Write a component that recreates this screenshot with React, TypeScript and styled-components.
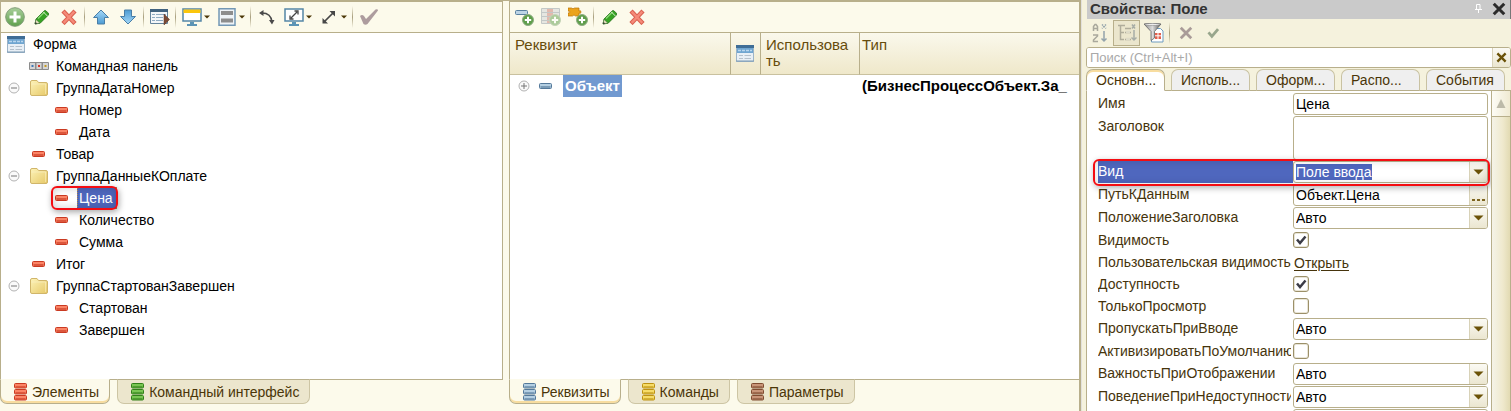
import React, { ReactNode } from "react";
import styled, { createGlobalStyle, css } from "styled-components";

const line = "#b8af8b";
const cream = "#fcfaeb";

const GlobalStyle = createGlobalStyle`
  *, *::before, *::after { box-sizing: border-box; }
  body {
    margin: 0;
    background: ${cream};
    color: #000;
    font: 14px/16px "Liberation Sans", Arial, sans-serif;
    overflow: hidden;
  }
  button, input, select, textarea { font: inherit; color: inherit; }
  svg { display: block; flex: none; }
`;

/* ---------- layout ---------- */

const Workspace = styled.div`
  display: grid;
  grid-template-columns: minmax(0, 503fr) 6px minmax(0, 572fr) 430px;
  height: 100vh;
`;

const Pane = styled.section<{ $edge?: number }>`
  display: flex;
  flex-direction: column;
  min-width: 0;
  padding-bottom: 7px;
  border-top: 2px solid ${line};
  border-right: ${(p) => p.$edge ?? 0}px solid ${line};
`;

const Splitter = styled.div`
  border-top: 1px solid ${line};
`;

const PaneBody = styled.div<{ $right?: boolean }>`
  display: flex;
  flex-direction: column;
  flex: 1;
  min-height: 0;
  background: #fff;
  border-left: 1px solid ${line};
  border-right: ${(p) => (p.$right ? 1 : 0)}px solid ${line};
`;

const Toolbar = styled.div<{ $plain?: boolean }>`
  display: flex;
  align-items: center;
  height: ${(p) => (p.$plain ? 28 : 31)}px;
  flex: none;
  background: ${(p) => (p.$plain ? "transparent" : cream)};
  border-bottom: ${(p) => (p.$plain ? 0 : 1)}px solid ${line};
`;

const ToolButton = styled.button<{ $menu?: boolean; $pressed?: boolean }>`
  display: flex;
  align-items: center;
  justify-content: center;
  gap: 2px;
  width: ${(p) => (p.$menu ? 35 : 27)}px;
  height: 26px;
  padding: 0;
  border: 1px solid transparent;
  background: none;
  ${(p) =>
    p.$pressed &&
    css`
      background: #ebe6cd;
      border-color: ${line};
    `}
`;

const Separator = styled.span`
  width: 1px;
  height: 22px;
  margin: 0 2px;
  background: linear-gradient(transparent, #a89f7d, transparent);
`;

/* ---------- tree ---------- */

const Tree = styled.ul`
  flex: 1;
  margin: 0;
  padding: 0;
  list-style: none;
  min-height: 0;
`;

const TreeRow = styled.li<{ $indent: number }>`
  display: flex;
  align-items: center;
  height: 22px;
  padding-left: ${(p) => p.$indent}px;
`;

const IconSlot = styled.span<{ $w: number }>`
  display: flex;
  justify-content: center;
  width: ${(p) => p.$w}px;
`;

const Expander = styled.button`
  display: flex;
  width: 12px;
  height: 12px;
  margin: 0 9px 0 7px;
  padding: 0;
  border: 0;
  background: none;
`;

const TreeText = styled.span<{ $selected?: boolean }>`
  padding: 3px 4px 3px 2px;
  margin-left: 5px;
  ${(p) =>
    p.$selected &&
    css`
      color: #fff;
      background: #4f67be;
      outline: 1px dotted #b98a4a;
      outline-offset: -1px;
    `}
`;

const Marked = styled.span`
  position: relative;
  display: flex;
  align-items: center;
  &::after {
    content: "";
    position: absolute;
    inset: -1px -1px -1px -4px;
    border: 2px solid #f40d12;
    border-radius: 6px;
    box-shadow: 1px 2px 6px rgba(0, 0, 0, 0.35), inset 0 0 8px rgba(0, 0, 0, 0.2);
    pointer-events: none;
  }
`;

/* ---------- tabs under the panes ---------- */

const BottomTabs = styled.div`
  display: flex;
  height: 25px;
  flex: none;
  &::after {
    content: "";
    flex: 1;
    border-top: 1px solid ${line};
  }
`;

const BottomTab = styled.button<{ $active?: boolean }>`
  display: flex;
  align-items: center;
  gap: 5px;
  padding: 0 10px 0 13px;
  margin: 0;
  color: #4a3508;
  white-space: nowrap;
  border: 1px solid ${(p) => (p.$active ? line : "#cdc5a4")};
  border-top: 1px solid ${(p) => (p.$active ? cream : line)};
  border-radius: 0 0 7px 7px;
  background: ${(p) => (p.$active ? cream : "#ece6cd")};
  box-shadow: ${(p) => (p.$active ? "inset 0 -2px 0 #f8dda0" : "none")};
`;

const TabGap = styled.span`
  width: 7px;
  border-top: 1px solid ${line};
`;

/* ---------- attribute table ---------- */

const AttrTable = styled.table`
  width: 100%;
  table-layout: fixed;
  border-collapse: separate;
  border-spacing: 0;
  font-size: 15px;
`;

const HeadCell = styled.th<{ $w?: number }>`
  width: ${(p) => (p.$w ? `${p.$w}px` : "auto")};
  height: 42px;
  padding: 4px 0 0 5px;
  text-align: left;
  vertical-align: top;
  font-weight: 400;
  color: #664c0c;
  background: linear-gradient(#faf8ec, #efe8ca);
  border-bottom: 1px solid #c9c19f;
  border-right: 1px solid ${line};
  &:last-child { border-right: 0; padding-left: 2px; }
`;

const IconHeadCell = styled(HeadCell)`
  vertical-align: middle;
  padding-top: 0;
`;

const Cell = styled.td`
  height: 22px;
  padding: 0 8px 0 2px;
  font-weight: 700;
  white-space: nowrap;
  overflow: hidden;
  &:first-child { padding-left: 1px; }
`;

const AttrName = styled.div`
  display: flex;
  align-items: center;
`;

const Chosen = styled.span`
  padding: 3px 2px;
  margin-left: 11px;
  color: #fff;
  background: #7199d0;
`;

/* ---------- property palette ---------- */

const Palette = styled.aside`
  display: flex;
  flex-direction: column;
  min-width: 0;
  min-height: 0;
  padding-left: 4px;
  overflow: hidden;
  background: #f5f2dd;
  border-left: 1px solid #e3e1dc;
`;

const TitleBar = styled.header`
  display: flex;
  align-items: center;
  height: 19px;
  flex: none;
  padding: 0 4px 2px 3px;
  margin-left: 1px;
  background: #cacaca;
  border-right: 1px solid #777;
`;

const Title = styled.h1`
  flex: 1;
  margin: 0;
  font-size: 15px;
  line-height: 16px;
  color: #333;
`;

const PlainButton = styled.button`
  padding: 0;
  margin-left: 10px;
  border: 0;
  background: none;
`;

const SearchBox = styled.div`
  display: flex;
  height: 21px;
  flex: none;
  background: #fff;
  border: 1px solid ${line};
  border-radius: 3px;
  overflow: hidden;
`;

const SearchInput = styled.input`
  flex: 1;
  min-width: 0;
  padding: 0 3px;
  border: 0;
  outline: 0;
  font-size: 13px;
  &::placeholder { color: #a9a9a9; opacity: 1; }
`;

const FieldButton = styled.button`
  display: flex;
  align-items: center;
  justify-content: center;
  width: 18px;
  flex: none;
  padding: 0;
  border: 0;
  border-left: 1px solid #d8d2b8;
  background: linear-gradient(#fbfaf4, #ebe6d0);
`;

const TopTabs = styled.div`
  display: flex;
  height: 23px;
  flex: none;
  padding-top: 1px;
`;

const TopTab = styled.button<{ $active?: boolean }>`
  flex: 1;
  min-width: 0;
  padding: 0 0 0 9px;
  text-align: left;
  color: #4a3508;
  border: 1px solid ${(p) => (p.$active ? line : "#c9c2a2")};
  border-bottom: 1px solid ${(p) => (p.$active ? "#fff" : line)};
  border-radius: 7px 7px 0 0;
  background: ${(p) => (p.$active ? "#fff" : "#efefef")};
  box-shadow: ${(p) => (p.$active ? "inset 0 2px 0 #f8dda0" : "none")};
`;

const TopGap = styled.span`
  width: 6px;
  border-bottom: 1px solid ${line};
`;

const PaletteBody = styled.div`
  display: flex;
  flex: 1;
  min-height: 0;
  background: #fff;
  border-left: 1px solid ${line};
`;

const PropList = styled.div`
  flex: 1;
  min-width: 0;
  padding: 2px 3px 0 11px;
  overflow: hidden;
`;

const PropRow = styled.div<{ $h: number; $marked?: boolean }>`
  position: relative;
  display: grid;
  grid-template-columns: 195px minmax(0, 1fr);
  height: ${(p) => p.$h}px;
  ${(p) =>
    p.$marked &&
    css`
      z-index: 1;
      &::after {
        content: "";
        position: absolute;
        inset: -2px -2px -2px -5px;
        border: 2px solid #f40d12;
        border-radius: 6px;
        box-shadow: 1px 2px 6px rgba(0, 0, 0, 0.3), inset 0 0 8px rgba(0, 0, 0, 0.15);
        pointer-events: none;
      }
    `}
`;

const PropLabel = styled.label<{ $selected?: boolean }>`
  height: 22px;
  padding: 2px 0;
  margin-right: ${(p) => (p.$selected ? 0 : 2)}px;
  white-space: nowrap;
  overflow: hidden;
  color: ${(p) => (p.$selected ? "#fff" : "#46340c")};
  background: ${(p) => (p.$selected ? "#4f67be" : "none")};
`;

const FieldBox = styled.div`
  display: flex;
  margin-bottom: 1px;
  background: #fff;
  border: 1px solid ${line};
  border-radius: 3px;
  overflow: hidden;
`;

const fieldReset = css`
  flex: 1;
  min-width: 0;
  margin: 0;
  padding: 0 2px;
  border: 0;
  outline: 0;
  background: none;
`;

const TextInput = styled.input`${fieldReset}`;
const TextArea = styled.textarea`${fieldReset} resize: none;`;
const Select = styled.select<{ $picked?: boolean }>`
  ${fieldReset}
  appearance: none;
  ${(p) =>
    p.$picked &&
    css`
      flex: none;
      margin: 2px auto 2px 2px;
      padding: 0;
      color: #fff;
      background: #4f67be;
    `}
`;

const ArrowCap = styled.span`
  display: flex;
  align-items: center;
  justify-content: center;
  width: 18px;
  flex: none;
  border-left: 1px solid #d8d2b8;
  background: linear-gradient(#fbfaf4, #ebe6d0);
`;

const CheckWrap = styled.span`
  position: relative;
  width: 16px;
  height: 16px;
  margin-top: 2px;
  svg {
    position: absolute;
    inset: 0;
    pointer-events: none;
  }
`;

const CheckInput = styled.input`
  appearance: none;
  display: block;
  width: 16px;
  height: 16px;
  margin: 0;
  border: 1px solid #9c9069;
  border-radius: 3px;
  background: #fff;
  box-shadow: inset 0 0 0 1px #e9e5d6;
`;

const LinkCell = styled.div`
  padding: 3px 0 0 1px;
`;

const OpenLink = styled.a`
  color: #46340c;
  text-underline-offset: 2px;
`;

const ScrollTrack = styled.div`
  width: 20px;
  border-left: 1px solid ${line};
  border-right: 1px solid ${line};
  background: linear-gradient(90deg, #f5f3e8, #efe9cd 60%, #e2dab2);
`;

const ScrollButton = styled.button`
  display: flex;
  align-items: center;
  justify-content: center;
  width: 100%;
  height: 26px;
  padding: 0;
  border: 0;
  border-bottom: 1px solid ${line};
  background: linear-gradient(90deg, #fdfcf6, #f0ead2);
`;

/* ---------- icons ---------- */

const DefsSvg = styled.svg`
  position: absolute;
`;

const Defs = () => (
  <DefsSvg width="0" height="0" aria-hidden>
    <defs>
      <linearGradient id="green" x2="0" y2="1"><stop stopColor="#a9cf9b" /><stop offset="1" stopColor="#5fa04c" /></linearGradient>
      <linearGradient id="blue" x2="0" y2="1"><stop stopColor="#a5d8f8" /><stop offset="1" stopColor="#4c9bd3" /></linearGradient>
      <linearGradient id="folder" x2="1" y2="1"><stop stopColor="#fdf3b8" /><stop offset="1" stopColor="#e6c867" /></linearGradient>
      <linearGradient id="steel" x2="1" y2="0"><stop stopColor="#8a8a8a" /><stop offset=".5" stopColor="#dcdcdc" /><stop offset="1" stopColor="#555" /></linearGradient>
    </defs>
  </DefsSvg>
);

const AddIcon = () => (
  <svg width="20" height="20" viewBox="0 0 20 20">
    <circle cx="10" cy="10" r="9.300" fill="url(#green)" stroke="#7f9c77" />
    <path d="M10 4.500v11M4.500 10h11" stroke="#fff" strokeWidth="3" />
  </svg>
);
const PencilIcon = () => (
  <svg width="16" height="16" viewBox="0 0 16 16">
    <path d="M1 15l1-5 8-8q1-1 2.200 0l2 2q1 1 0 2.200l-8 8z" fill="#37a324" stroke="#23701a" strokeWidth=".8" />
    <path d="M4 9.500l6.500-6.500" stroke="#8ad776" strokeWidth="1.500" />
    <path d="M9.200 2.800l4.200 4.200" stroke="#d9efcf" strokeWidth="1" />
    <path d="M1 15l1-4.600 3.800 3.700z" fill="#e9e3c2" stroke="#456b38" strokeWidth=".5" />
    <path d="M1 15l.6-2 1.500 1.500z" fill="#222" />
  </svg>
);
const DeleteIcon = () => (
  <svg width="16" height="16" viewBox="0 0 16 16">
    <path d="M3.500 3.500l9 9.500M12.500 3.500L3.500 13" stroke="#d9604f" strokeWidth="4.400" strokeLinecap="square" />
    <path d="M3.500 3.500l9 9.500M12.500 3.500L3.500 13" stroke="#f58a79" strokeWidth="2.400" strokeLinecap="square" />
  </svg>
);
const ArrowIcon = ({ down }: { down?: boolean }) => (
  <svg width="18" height="16" viewBox="0 0 18 16">
    <path transform={down ? "rotate(180 9 8)" : undefined} d="M9 1l7.500 7.500h-4V15h-7V8.500h-4z" fill="url(#blue)" stroke="#4a7ea6" strokeLinejoin="round" />
  </svg>
);
const WindowIcon = () => (
  <svg width="18" height="17" viewBox="0 0 18 17">
    <path d="M.5 .5h17v16H.5z" fill="#e8eff6" stroke="#9db4c8" />
    <path d="M0 0h18v3H0z" fill="#3f6d96" />
    <path d="M1 3h16v5H1z" fill="#6fa5d0" />
    <path d="M2 5.500h14" stroke="#b9d6ee" strokeWidth="1.500" strokeDasharray="3 1" />
    <path d="M3 10.500h4M8.500 10.500H15M3 13.500h4M8.500 13.500H15" stroke="#b5c0cb" />
    <path d="M0 16h18" stroke="#7d9ab3" />
  </svg>
);
const RunFormIcon = () => (
  <svg width="20" height="18" viewBox="0 0 20 18">
    <path d="M.5 1.500h17v14H.5z" fill="#f3f6f9" stroke="#64839c" />
    <path d="M0 1h18v3H0z" fill="#40627f" />
    <path d="M2 6.500h3M6 6.500h10M2 9.500h3M6 9.500h7M2 12.500h3M6 12.500h7" stroke="#8fabc2" strokeWidth="1.200" />
    <path d="M14 6l5.500 5.500L14 17z" fill="#7b4a35" stroke="#5c3524" strokeWidth=".5" />
  </svg>
);
const MonitorIcon = ({ resize }: { resize?: boolean }) => (
  <svg width="20" height="18" viewBox="0 0 20 18">
    <path d="M1 1h18v12H1z" fill="#fff" stroke="#5486a6" strokeWidth="1.500" />
    {resize ? (
      <path d="M7 10l6-6M6 7.500V11h3.500M10.500 3H14v3.500" fill="none" stroke="#454545" strokeWidth="1.300" />
    ) : (
      <path d="M1.500 1.500h17v3.500h-17z" fill="#fbc60c" />
    )}
    <path d="M8 14h4v2H8zM5 16h10v2H5z" fill="#5c94b5" />
  </svg>
);
const LayoutIcon = () => (
  <svg width="20" height="18" viewBox="0 0 20 18">
    <path d="M2 .8h16v16.400H2z" fill="#eef3f7" stroke="#7398b5" strokeWidth="1.500" />
    <path d="M4 3h12v4H4zM4 10.500h12v4H4z" fill="#8d8d8d" />
  </svg>
);
const RotateIcon = () => (
  <svg width="16" height="16" viewBox="0 0 16 16">
    <path d="M3 4q9 0 10 9" fill="none" stroke="#4a4a4a" strokeWidth="1.500" />
    <path d="M0 4l4.500-3v6zM10 11h5.500L13 15.500z" fill="#4a4a4a" />
  </svg>
);
const DiagonalIcon = () => (
  <svg width="20" height="18" viewBox="0 0 20 18">
    <path d="M5 14L15 4" stroke="#474747" strokeWidth="1.700" />
    <path d="M10.500 3H16v5.500zM3.500 10v5.500H9z" fill="#474747" />
  </svg>
);
const TickIcon = () => (
  <svg width="20" height="18" viewBox="0 0 20 18">
    <path d="M1 8q2-2 4 0l2 3L16.500 1.500q2.500-.8 2.500 1L8.500 16q-2 1.500-4 0z" fill="#ad9c9e" />
  </svg>
);
const Caret = () => (
  <svg width="6" height="4" viewBox="0 0 6 4"><path d="M0 .5h6l-3 3z" fill="#4b3606" /></svg>
);
const DropArrow = () => (
  <svg width="11" height="6" viewBox="0 0 11 6"><path d="M.5 .5h10l-5 5z" fill="#6b5208" /></svg>
);
const CommandBarIcon = () => (
  <svg width="20" height="8" viewBox="0 0 20 8">
    <rect width="20" height="8" rx="1" fill="#8c8c8c" />
    <path d="M1 1h5v6H1zM7.500 1h5v6h-5zM14 1h5v6h-5z" fill="#d5d5d5" />
    <path d="M2.500 3h2v2h-2z" fill="#3f78b5" /><path d="M9 3h2v2H9z" fill="#d8362a" /><path d="M15.500 3h2v2h-2z" fill="#c79a1e" />
  </svg>
);
const FolderIcon = () => (
  <svg width="18" height="16" viewBox="0 0 18 16">
    <path d="M.5 2Q.5 .5 2 .5h5L8.500 2.500H16q1.500 0 1.500 1.500v10q0 1.500-1.500 1.500H2Q.5 15.500 .5 14z" fill="url(#folder)" stroke="#d0b56a" />
    <path d="M1.500 4h14v10" fill="none" stroke="#fdf6cf" opacity=".5" />
  </svg>
);
const palettes: Record<string, [string, string]> = {
  red: ["#c93a22", "#fb8466"],
  blue: ["#54799a", "#b4cfe2"],
  green: ["#32801a", "#79c653"],
  yellow: ["#bd9212", "#f6dc68"],
  brown: ["#804c32", "#c99579"],
};
const DashIcon = ({ tone }: { tone: string }) => (
  <svg width="13" height="6" viewBox="0 0 13 6">
    <rect x=".5" y=".5" width="12" height="5" rx="1" fill={palettes[tone][1]} stroke={palettes[tone][0]} />
    <path d="M1.500 4h10" stroke={palettes[tone][0]} strokeWidth="2" opacity=".6" />
  </svg>
);
const StackIcon = ({ tone }: { tone: string }) => (
  <svg width="13" height="18" viewBox="0 0 13 18">
    {[0, 6, 12].map((y) => (
      <g key={y}>
        <rect x=".5" y={y + 0.5} width="12" height="4.500" rx="1" fill={palettes[tone][1]} stroke={palettes[tone][0]} />
        <path d={`M1.500 ${y + 3.8}h10`} stroke={palettes[tone][0]} strokeWidth="1.500" opacity=".6" />
      </g>
    ))}
  </svg>
);
const ExpandIcon = ({ plus }: { plus?: boolean }) => (
  <svg width="12" height="12" viewBox="0 0 12 12">
    <circle cx="6" cy="6" r="5" fill="#fafafa" stroke="#b3b3b3" />
    <path d={plus ? "M3 6h6M6 3v6" : "M3 6h6"} stroke="#777" />
  </svg>
);
const Badge = () => (
  <g>
    <circle cx="14" cy="13" r="5.500" fill="#5f9e4b" stroke="#8fae84" />
    <path d="M14 9.800v6.400M10.800 13h6.400" stroke="#fff" strokeWidth="2" />
  </g>
);
const AddAttrIcon = () => (
  <svg width="20" height="20" viewBox="0 0 20 20">
    <rect x="1.500" y="3.500" width="12" height="4" rx="1" fill="#bcd4e6" stroke="#58809f" />
    <Badge />
  </svg>
);
const AddColumnIcon = () => (
  <svg width="20" height="20" viewBox="0 0 20 20" opacity=".5">
    <path d="M.5 1.500h18v15H.5z" fill="#cfd3d9" stroke="#8c98a4" />
    <path d="M6 2h6v14H6z" fill="#c97a72" />
    <path d="M1 5.500h17M1 9.500h17M1 13.500h17" stroke="#8c98a4" />
    <Badge />
  </svg>
);
const AddPuzzleIcon = () => (
  <svg width="20" height="20" viewBox="0 0 20 20">
    <path d="M0 1h3.500q1.500 1.500 3 0H11v3q2-1 2 1t-2 1v3H7.500Q6 7 4.500 9H0V6q2 0 2-1T0 4z" fill="#eba31d" stroke="#b97306" strokeWidth=".7" />
    <Badge />
  </svg>
);
const SortIcon = () => (
  <svg width="16" height="20" viewBox="0 0 16 20" fill="none" stroke="#a9a89c" strokeWidth="1.500">
    <path d="M1.500 8V3.500L3 1.500h1L5.500 3.500V8M1.500 5.500h4M1 12h4.500v1L1.500 17v1.500H6" />
    <path d="M12 8v10M9.500 15.500L12 18l2.500-2.500" stroke="#93a3ab" />
    <path d="M10 1.500l4 4M14 1.500l-4 4" stroke="#93a3ab" strokeDasharray="1.500 1" />
  </svg>
);
const GroupIcon = () => (
  <svg width="20" height="20" viewBox="0 0 20 20" fill="none" stroke="#b0ad9b" strokeWidth="1.500">
    <path d="M1 2.500h7M3.500 3v13.500H7M3.500 9.500H7M8 9.500h6M8 16.500h6M8 5.500h6" />
    <path d="M9 9h4M9 16h4" stroke="#dedbc8" strokeWidth="2.500" />
    <path d="M17 7v10M14.500 14.500L17 17l2.500-2.500M15 1.500l3 4M18 1.500l-3 4" stroke="#a8ada6" />
  </svg>
);
const FilterIcon = () => (
  <svg width="20" height="20" viewBox="0 0 20 20">
    <path d="M7.500 5.500h9l2.500 2.500v11H7.500z" fill="#fff" stroke="#6e9bc0" />
    <path d="M11 10h6v6h-6z" fill="#e2604d" />
    <path d="M9 12.800h9M14 9v8" stroke="#fff" />
    <path d="M0 1q8.500-2 17 0l-6.500 7.500V15L7 17.500v-9z" fill="url(#steel)" stroke="#666" strokeWidth=".8" />
    <ellipse cx="8.500" cy="1.500" rx="7.500" ry="1.100" fill="#ededed" stroke="#777" strokeWidth=".5" />
  </svg>
);
const CrossIcon = ({ size, color, w }: { size: number; color: string; w: number }) => (
  <svg width={size} height={size} viewBox="0 0 12 12">
    <path d="M1.500 1.500l9 9M10.500 1.500l-9 9" stroke={color} strokeWidth={w} />
  </svg>
);
const SmallTick = ({ size, color }: { size: number; color: string }) => (
  <svg width={size} height={size} viewBox="0 0 16 16">
    <path d="M4 7.500l3 3.500 5.500-6.500" fill="none" stroke={color} strokeWidth="2.500" />
  </svg>
);
const PinIcon = () => (
  <svg width="7" height="9" viewBox="0 0 7 9" fill="none" stroke="#fff">
    <path d="M1.500 5V.5h3.500V5M0 5.500h7M3.500 6v3" />
  </svg>
);
const DotsIcon = () => (
  <svg width="13" height="14" viewBox="0 0 13 14"><path d="M0 11h3v2H0zM5 11h3v2H5zM10 11h3v2h-3z" fill="#7d6420" /></svg>
);
const ScrollUpIcon = () => (
  <svg width="10" height="9" viewBox="0 0 10 9"><path d="M5 0l4.500 9h-9z" fill="#bdbaa9" /></svg>
);

/* ---------- data ---------- */

type Node = { kind: "bar" | "folder" | "item"; level: number; text: string; selected?: boolean };
const nodes: Node[] = [
  { kind: "bar", level: 1, text: "Командная панель" },
  { kind: "folder", level: 1, text: "ГруппаДатаНомер" },
  { kind: "item", level: 2, text: "Номер" },
  { kind: "item", level: 2, text: "Дата" },
  { kind: "item", level: 1, text: "Товар" },
  { kind: "folder", level: 1, text: "ГруппаДанныеКОплате" },
  { kind: "item", level: 2, text: "Цена", selected: true },
  { kind: "item", level: 2, text: "Количество" },
  { kind: "item", level: 2, text: "Сумма" },
  { kind: "item", level: 1, text: "Итог" },
  { kind: "folder", level: 1, text: "ГруппаСтартованЗавершен" },
  { kind: "item", level: 2, text: "Стартован" },
  { kind: "item", level: 2, text: "Завершен" },
];

type Prop = {
  label: string;
  kind: "text" | "area" | "select" | "pick" | "check" | "link";
  value?: string;
  checked?: boolean;
  selected?: boolean;
};
const props: Prop[] = [
  { label: "Имя", kind: "text", value: "Цена" },
  { label: "Заголовок", kind: "area" },
  { label: "Вид", kind: "select", value: "Поле ввода", selected: true },
  { label: "ПутьКДанным", kind: "pick", value: "Объект.Цена" },
  { label: "ПоложениеЗаголовка", kind: "select", value: "Авто" },
  { label: "Видимость", kind: "check", checked: true },
  { label: "Пользовательская видимость", kind: "link", value: "Открыть" },
  { label: "Доступность", kind: "check", checked: true },
  { label: "ТолькоПросмотр", kind: "check" },
  { label: "ПропускатьПриВводе", kind: "select", value: "Авто" },
  { label: "АктивизироватьПоУмолчанию", kind: "check" },
  { label: "ВажностьПриОтображении", kind: "select", value: "Авто" },
  { label: "ПоведениеПриНедоступности", kind: "select", value: "Авто" },
  { label: "", kind: "text", value: "" },
];
const rowHeight = (k: Prop["kind"]) => (k === "area" ? 45 : k === "check" || k === "link" ? 22 : 23);

/* ---------- parts ---------- */

const Tool = ({ name, menu, pressed, children }: { name: string; menu?: boolean; pressed?: boolean; children: ReactNode }) => (
  <ToolButton type="button" aria-label={name} $menu={menu} $pressed={pressed}>
    {children}
    {menu && <Caret />}
  </ToolButton>
);

const TreeItem = ({ node }: { node: Node }) => {
  const { kind, level, text, selected } = node;
  const body = (
    <>
      {kind === "item" && <DashIcon tone="red" />}
      {kind === "folder" && <IconSlot $w={20}><FolderIcon /></IconSlot>}
      {kind === "bar" && <IconSlot $w={20}><CommandBarIcon /></IconSlot>}
      {kind === "item" ? <IconSlot $w={4} /> : null}
      <TreeText $selected={selected}>{text}</TreeText>
    </>
  );
  const indent = kind === "folder" ? 0 : kind === "bar" ? 28 : level === 1 ? 31 : 54;
  return (
    <TreeRow $indent={indent}>
      {kind === "folder" && <Expander type="button" aria-label="Свернуть"><ExpandIcon /></Expander>}
      {selected ? <Marked>{body}</Marked> : body}
    </TreeRow>
  );
};

const Field = ({ prop, id }: { prop: Prop; id: string }) => {
  switch (prop.kind) {
    case "check":
      return (
        <CheckWrap>
          <CheckInput id={id} type="checkbox" defaultChecked={prop.checked} />
          {prop.checked && <SmallTick size={16} color="#3c3c46" />}
        </CheckWrap>
      );
    case "link":
      return <LinkCell><OpenLink id={id} href="#open">{prop.value}</OpenLink></LinkCell>;
    case "area":
      return <FieldBox><TextArea id={id} /></FieldBox>;
    case "select":
      return (
        <FieldBox>
          <Select id={id} $picked={prop.selected}><option>{prop.value}</option></Select>
          <ArrowCap><DropArrow /></ArrowCap>
        </FieldBox>
      );
    case "pick":
      return (
        <FieldBox>
          <TextInput id={id} defaultValue={prop.value} />
          <FieldButton type="button" aria-label="Выбрать"><DotsIcon /></FieldButton>
        </FieldBox>
      );
    default:
      return <FieldBox><TextInput id={id} defaultValue={prop.value} aria-label={prop.label || "Значение"} /></FieldBox>;
  }
};

const Tabs = ({ items }: { items: [string, string][] }) => (
  <BottomTabs>
    {items.map(([tone, text], i) => (
      <React.Fragment key={text}>
        {i > 0 && <TabGap />}
        <BottomTab type="button" $active={i === 0}><StackIcon tone={tone} />{text}</BottomTab>
      </React.Fragment>
    ))}
  </BottomTabs>
);

export default function App() {
  return (
    <>
      <GlobalStyle />
      <Defs />
      <Workspace>
        <Pane>
          <PaneBody $right>
            <Toolbar>
              <Tool name="Добавить"><AddIcon /></Tool>
              <Tool name="Изменить"><PencilIcon /></Tool>
              <Tool name="Удалить"><DeleteIcon /></Tool>
              <Separator />
              <Tool name="Вверх"><ArrowIcon /></Tool>
              <Tool name="Вниз"><ArrowIcon down /></Tool>
              <Separator />
              <Tool name="Проверить форму"><RunFormIcon /></Tool>
              <Separator />
              <Tool name="Экран" menu><MonitorIcon /></Tool>
              <Tool name="Расположение" menu><LayoutIcon /></Tool>
              <Separator />
              <Tool name="Повернуть"><RotateIcon /></Tool>
              <Tool name="Размер экрана" menu><MonitorIcon resize /></Tool>
              <Tool name="Масштаб" menu><DiagonalIcon /></Tool>
              <Separator />
              <Tool name="Применить"><TickIcon /></Tool>
            </Toolbar>
            <Tree>
              <TreeRow $indent={5}>
                <IconSlot $w={20}><WindowIcon /></IconSlot>
                <TreeText>Форма</TreeText>
              </TreeRow>
              {nodes.map((n) => <TreeItem key={n.text} node={n} />)}
            </Tree>
          </PaneBody>
          <Tabs items={[["red", "Элементы"], ["green", "Командный интерфейс"]]} />
        </Pane>
        <Splitter />
        <Pane $edge={2}>
          <PaneBody>
            <Toolbar>
              <Tool name="Добавить реквизит"><AddAttrIcon /></Tool>
              <Tool name="Добавить колонку"><AddColumnIcon /></Tool>
              <Tool name="Добавить расширение"><AddPuzzleIcon /></Tool>
              <Separator />
              <Tool name="Изменить"><PencilIcon /></Tool>
              <Tool name="Удалить"><DeleteIcon /></Tool>
            </Toolbar>
            <AttrTable>
              <thead>
                <tr>
                  <HeadCell $w={221}>Реквизит</HeadCell>
                  <IconHeadCell $w={30}><WindowIcon /></IconHeadCell>
                  <HeadCell $w={99}>Использова<wbr />ть</HeadCell>
                  <HeadCell>Тип</HeadCell>
                </tr>
              </thead>
              <tbody>
                <tr>
                  <Cell>
                    <AttrName>
                      <Expander type="button" aria-label="Развернуть"><ExpandIcon plus /></Expander>
                      <DashIcon tone="blue" />
                      <Chosen>Объект</Chosen>
                    </AttrName>
                  </Cell>
                  <Cell />
                  <Cell />
                  <Cell>(БизнесПроцессОбъект.За_</Cell>
                </tr>
              </tbody>
            </AttrTable>
          </PaneBody>
          <Tabs items={[["blue", "Реквизиты"], ["yellow", "Команды"], ["brown", "Параметры"]]} />
        </Pane>
        <Palette>
          <TitleBar>
            <Title>Свойства: Поле</Title>
            <PlainButton type="button" aria-label="Закрепить"><PinIcon /></PlainButton>
            <PlainButton type="button" aria-label="Закрыть"><CrossIcon size={14} color="#2b2b2b" w={2.6} /></PlainButton>
          </TitleBar>
          <Toolbar $plain>
            <Tool name="По алфавиту"><SortIcon /></Tool>
            <Tool name="По категориям" pressed><GroupIcon /></Tool>
            <Tool name="Отбор"><FilterIcon /></Tool>
            <Separator />
            <Tool name="Отменить"><CrossIcon size={14} color="#a99b98" w={2.4} /></Tool>
            <Tool name="Применить"><SmallTick size={18} color="#98a68c" /></Tool>
          </Toolbar>
          <SearchBox>
            <SearchInput placeholder="Поиск (Ctrl+Alt+I)" aria-label="Поиск" />
            <FieldButton type="button" aria-label="Очистить"><CrossIcon size={11} color="#6b5208" w={2.6} /></FieldButton>
          </SearchBox>
          <TopTabs>
            {["Основн...", "Исполь...", "Оформ...", "Распо...", "События"].map((t, i) => (
              <React.Fragment key={t}>
                {i > 0 && <TopGap />}
                <TopTab type="button" $active={i === 0}>{t}</TopTab>
              </React.Fragment>
            ))}
            <TopGap />
          </TopTabs>
          <PaletteBody>
            <PropList>
              {props.map((p, i) => (
                <PropRow key={p.label} $h={rowHeight(p.kind)} $marked={p.selected}>
                  <PropLabel htmlFor={`prop-${i}`} $selected={p.selected}>{p.label}</PropLabel>
                  <Field prop={p} id={`prop-${i}`} />
                </PropRow>
              ))}
            </PropList>
            <ScrollTrack>
              <ScrollButton type="button" aria-label="Прокрутить вверх"><ScrollUpIcon /></ScrollButton>
            </ScrollTrack>
          </PaletteBody>
        </Palette>
      </Workspace>
    </>
  );
}
